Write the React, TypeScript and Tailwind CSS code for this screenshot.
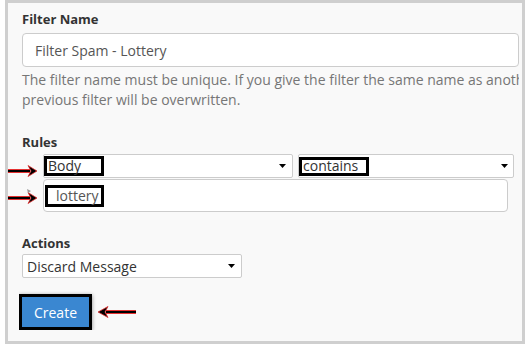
import React from "react";

function Caret() {
  return (
    <svg width="7" height="4" viewBox="0 0 7 4" className="shrink-0">
      <path d="M0 0 L7 0 L3.5 4 Z" fill="#000" />
    </svg>
  );
}

function ArrowRight({ className }: { className: string }) {
  return (
    <svg width="32" height="14" viewBox="0 0 32 14" className={className}>
      <line x1="1" y1="7" x2="23" y2="7" stroke="#e53030" strokeWidth="4" />
      <line x1="1" y1="7" x2="23" y2="7" stroke="#000" strokeWidth="2" />
      <path d="M21 1.5 L30 7 L21 12.5 L24 7 Z" fill="#000" stroke="#e53030" strokeWidth="0.8" />
    </svg>
  );
}

function ArrowLeft({ className }: { className: string }) {
  return (
    <svg width="40" height="14" viewBox="0 0 40 14" className={className}>
      <line x1="9" y1="7" x2="39" y2="7" stroke="#e53030" strokeWidth="4" />
      <line x1="9" y1="7" x2="39" y2="7" stroke="#000" strokeWidth="2" />
      <path d="M11 1.5 L1 7 L11 12.5 L8 7 Z" fill="#000" stroke="#e53030" strokeWidth="0.8" />
    </svg>
  );
}

export default function App() {
  return (
    <div
      className="relative w-[530px] h-[351px] bg-white pl-[5px]"
      style={{ fontFamily: '"Open Sans", "Liberation Sans", sans-serif' }}
    >
      <div className="w-[520px] h-[344px] border-[3px] border-[#cfcfcf] bg-[#f9f9f9] pl-[14px] pr-[3px] pt-[7px] overflow-hidden">
        <div className="w-[497px] overflow-hidden flex flex-col pl-[3px] -ml-[3px] w-[500px]">
          <div className="text-[13px] leading-[18px] font-bold text-[#333]">Filter Name</div>
          <div className="mt-[5px] h-[34px] w-[497px] rounded-[4px] border border-[#cccccc] bg-white flex items-center pl-[12px] text-[14px] text-[#555]">
            Filter Spam - Lottery
          </div>
          <div className="mt-[3px] text-[14px] leading-[20px] text-[#767676] whitespace-nowrap">
            <div>The filter name must be unique. If you give the filter the same name as another filter, the</div>
            <div>previous filter will be overwritten.</div>
          </div>

          <div className="mt-[23px] text-[13px] leading-[18px] font-bold text-[#333]">Rules</div>
          <div className="pl-[21px] flex flex-col">
            <div className="mt-[3px] flex gap-[5px]">
              <div className="h-[24px] w-[250px] rounded-[2px] border border-[#cccccc] bg-white flex items-center justify-between pr-[6px] text-[14px] text-[#333]">
                <span className="h-[20px] w-[60px] border-[3px] border-black flex items-center pl-[1px] leading-none">Body</span>
                <Caret />
              </div>
              <div className="h-[24px] w-[216px] rounded-[2px] border border-[#cccccc] bg-white flex items-center justify-between pr-[5px] text-[14px] text-[#333]">
                <span className="h-[19px] w-[70px] border-[3px] border-black flex items-center pl-[1px] leading-none">contains</span>
                <Caret />
              </div>
            </div>
            <div className="mt-[1px] h-[33px] w-[465px] rounded-[4px] border border-[#cccccc] bg-white flex items-center pl-[1px] text-[14px] text-[#555]">
              <span className="h-[22px] w-[59px] border-[3px] border-black flex items-center pl-[8px] leading-none">lottery</span>
            </div>
          </div>

          <div className="mt-[22px] text-[13px] leading-[18px] font-bold text-[#333]">Actions</div>
          <div className="mt-[2px] h-[24px] w-[220px] rounded-[2px] border border-[#cccccc] bg-white flex items-center justify-between pl-[4px] pr-[6px] text-[14px] text-[#333]">
            <span>Discard Message</span>
            <Caret />
          </div>

          <div className="mt-[16px] flex -ml-[3px]">
            <button className="h-[36px] w-[73px] border-[3px] border-black bg-[#3a87d1] text-white text-[14px] shadow-[0_1px_4px_rgba(0,0,0,0.45)] flex items-center justify-center">
              Create
            </button>
          </div>
        </div>
      </div>

      <ArrowRight className="absolute left-[7px] top-[164px]" />
      <ArrowRight className="absolute left-[7px] top-[191px]" />
      <svg width="5" height="5" viewBox="0 0 5 5" className="absolute left-[27px] top-[189px]">
        <path d="M0 0 L4 2 L1 4 Z" fill="#999" />
      </svg>
      <ArrowLeft className="absolute left-[97px] top-[305px]" />
    </div>
  );
}
